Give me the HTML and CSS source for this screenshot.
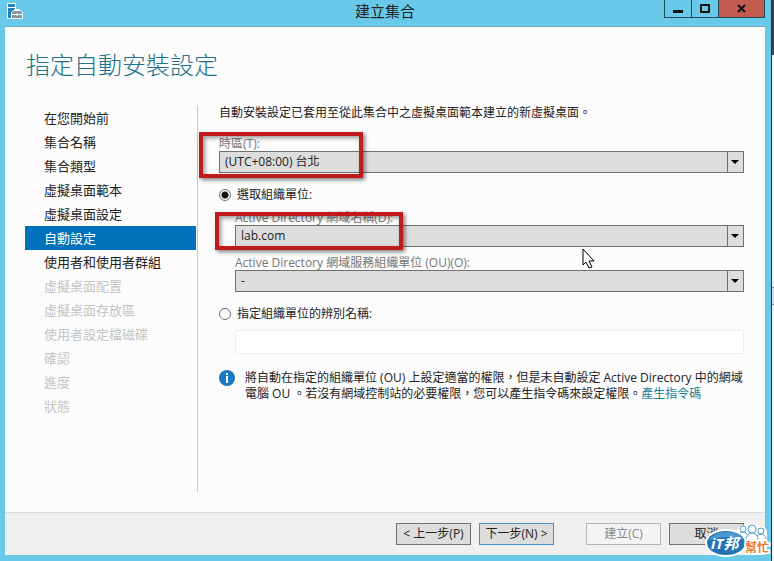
FILE: index.html
```
<!DOCTYPE html>
<html lang="zh-Hant">
<head>
  <meta charset="UTF-8">
  <meta name="viewport" content="width=device-width, initial-scale=1.0">
  <title>建立集合</title>
  <link rel="stylesheet" href="styles.css">
</head>
<body>
  <div class="window">
    <header class="titlebar">
      <svg class="app-icon" viewBox="0 0 16 16" width="16" height="16">
        <path d="M0.500 0.500h8v15h-8z" fill="#2b7fb8" stroke="#fff"/>
        <path d="M1 4.500h7" stroke="#fff"/>
        <path d="M4.500 9.500l2-2h7l2 2v6h-11z" fill="#8296a3" stroke="#fff"/>
        <path d="M7.500 7.500v-1h5v1M5 11.500h4M11 11.500h4M9.500 10.500v2M10.500 10.500v2" fill="none" stroke="#fff"/>
      </svg>
      <h1>建立集合</h1>
      <div class="window-buttons">
        <button type="button" aria-label="最小化">
          <svg viewBox="0 0 10 10" width="10" height="10"><path d="M0 6h10v3H0z" fill="#111"/></svg>
        </button>
        <button type="button" aria-label="最大化">
          <svg viewBox="0 0 10 10" width="10" height="10"><path d="M1 1h8v7H1z" fill="none" stroke="#111" stroke-width="2"/></svg>
        </button>
        <button type="button" class="close" aria-label="關閉">
          <svg viewBox="0 0 10 10" width="10" height="10"><path d="M1 1l7 7M8 1l-7 7" stroke="#111" stroke-width="2"/></svg>
        </button>
      </div>
    </header>

    <form class="wizard">
      <h2>指定自動安裝設定</h2>

      <div class="columns">
        <nav>
          <ul class="steps">
            <li><a href="#">在您開始前</a></li>
            <li><a href="#">集合名稱</a></li>
            <li><a href="#">集合類型</a></li>
            <li><a href="#">虛擬桌面範本</a></li>
            <li><a href="#">虛擬桌面設定</a></li>
            <li class="current"><a href="#">自動設定</a></li>
            <li><a href="#">使用者和使用者群組</a></li>
            <li class="disabled">虛擬桌面配置</li>
            <li class="disabled">虛擬桌面存放區</li>
            <li class="disabled">使用者設定檔磁碟</li>
            <li class="disabled">確認</li>
            <li class="disabled">進度</li>
            <li class="disabled">狀態</li>
          </ul>
        </nav>

        <div class="content">
          <p class="intro">自動安裝設定已套用至從此集合中之虛擬桌面範本建立的新虛擬桌面。</p>

          <div class="field">
            <label for="timezone">時區(T):</label>
            <div class="select">
              <select id="timezone"><option>(UTC+08:00) 台北</option></select>
            </div>
            <span class="mark mark-timezone"></span>
          </div>

          <label class="choice">
            <input type="radio" name="ou" checked>
            選取組織單位:
          </label>
          <div class="nested">
            <div class="field">
              <label for="domain">Active Directory 網域名稱(D):</label>
              <div class="select">
                <select id="domain"><option>lab.com</option></select>
              </div>
              <span class="mark mark-domain"></span>
            </div>
            <div class="field">
              <label for="unit">Active Directory 網域服務組織單位 (OU)(O):</label>
              <div class="select">
                <select id="unit"><option>-</option></select>
              </div>
            </div>
          </div>

          <label class="choice">
            <input type="radio" name="ou">
            指定組織單位的辨別名稱:
          </label>
          <div class="nested">
            <input type="text" class="dn" aria-label="指定組織單位的辨別名稱" disabled>
          </div>

          <div class="note">
            <svg viewBox="0 0 16 16" width="16" height="16">
              <circle cx="8" cy="8" r="8" fill="#1979c2"/>
              <path d="M7 3h2v2H7zM7 6h2v7H7z" fill="#fff"/>
            </svg>
            <p>將自動在指定的組織單位 (OU) 上設定適當的權限，但是未自動設定 Active Directory 中的網域電腦 OU 。若沒有網域控制站的必要權限，您可以產生指令碼來設定權限。<a href="#">產生指令碼</a></p>
          </div>
        </div>
      </div>

      <footer class="actions">
        <button type="button">&lt; 上一步(P)</button>
        <button type="button" class="default">下一步(N) &gt;</button>
        <button type="button" class="create" disabled>建立(C)</button>
        <button type="button">取消</button>
      </footer>
    </form>
  </div>

  <div class="backdrop">
    <div class="backdrop-top"></div>
    <div class="backdrop-panel"></div>
    <div class="backdrop-row"></div>
    <div class="backdrop-panel last"></div>
  </div>

  <svg class="cursor" viewBox="0 0 13 21" width="13" height="21">
    <path d="M1 1v16l3-3 3 6 3-1-3-6h5z" fill="#fff" stroke="#000"/>
  </svg>

  <div class="watermark">
    <svg viewBox="0 0 64 36" width="64" height="36">
      <path d="M32 17v-7q0-8 8-8q4-3 8-1q5-1 8 2q6 1 6 7v16h-30z" fill="#fff"/>
      <g fill="#fff" stroke="#4b9fd0" stroke-width="1">
        <path d="M33 14q1-5 5-5q4 0 5 5v3h-10zM51 16q1-5 5-5q4 0 5 5v3h-10z"/>
        <circle cx="38" cy="6" r="3"/>
        <circle cx="56" cy="8" r="3"/>
        <path d="M41 16q1-6 6-6q5 0 6 6v2h-12z"/>
        <circle cx="47" cy="6" r="4"/>
      </g>
      <ellipse cx="21" cy="20" rx="21" ry="14" fill="#fff"/>
      <ellipse cx="21" cy="20" rx="19" ry="12" fill="#2474b5"/>
      <path d="M4 17q6-8 18-8t17 8q-16-6-35 0z" fill="#4c9bd0"/>
    </svg>
    <span class="brand">iT邦</span>
    <span class="help">幫忙</span>
  </div>
</body>
</html>
```

FILE: styles.css
```
* {
  box-sizing: border-box;
}

body {
  margin: 0;
  min-height: 100vh;
  display: flex;
  background-color: #68c9e8;
  font-family: "Open Sans", "Noto Sans CJK TC", sans-serif;
  font-size: 12px;
  line-height: 16px;
  color: #222;
  position: relative;
}

h1, h2, p, ul {
  margin: 0;
  padding: 0;
  font-weight: normal;
}

button, input, select {
  font: inherit;
  color: inherit;
}

.window {
  flex: 1;
  display: flex;
  flex-direction: column;
  padding: 0 6px 6px 5px;
}

.titlebar {
  display: grid;
  grid-template-columns: 1fr auto 1fr;
  height: 26px;
}

.app-icon {
  margin: 3px 2px;
}

.titlebar h1 {
  font-size: 15px;
  line-height: 22px;
}

.window-buttons {
  display: flex;
  justify-content: flex-end;
  height: 18px;
}

.window-buttons button {
  width: 27px;
  padding: 0;
  border: 1px solid #234a58;
  border-width: 0 0 1px 1px;
  background: none;
  line-height: 0;
}

.window-buttons .close {
  width: 47px;
  border-right-width: 1px;
  background-color: #c35b50;
}

.wizard {
  flex: 1;
  display: flex;
  flex-direction: column;
  border-top: 1px solid #6fa9bd;
  background-color: #fcfcfc;
}

.wizard h2 {
  padding: 20px 21px 22px;
  font-size: 24px;
  font-weight: 300;
  line-height: 36px;
  color: #23708a;
}

.columns {
  flex: 1;
  display: flex;
  margin-bottom: 20px;
}

nav {
  width: 193px;
  padding: 1px 1px 0 20px;
  border-right: 1px solid #c8c8c8;
}

.steps {
  list-style: none;
  font-size: 13px;
  line-height: 24px;
}

.steps li {
  padding-left: 19px;
}

.steps a {
  color: inherit;
  text-decoration: none;
}

.steps .current {
  background-color: #0072bc;
  color: #fff;
}

.steps .disabled {
  color: #c4c4c4;
}

.content {
  flex: 1;
  padding: 0 21px;
}

.intro {
  margin-bottom: 16px;
}

.field {
  position: relative;
}

.field label {
  display: block;
  line-height: 14px;
  color: #777;
}

.select {
  position: relative;
}

.select::before {
  content: "";
  position: absolute;
  top: 0;
  bottom: 0;
  right: 16px;
  border-left: 1px solid #707070;
}

.select::after {
  content: "";
  position: absolute;
  top: 9px;
  right: 5px;
  border: 4px solid transparent;
  border-top-color: #000;
  border-bottom: 0;
}

select {
  display: block;
  width: 100%;
  height: 22px;
  padding: 0 20px 0 5px;
  border: 1px solid #707070;
  border-radius: 0;
  background-color: #ddd;
  appearance: none;
}

.choice {
  display: flex;
  align-items: center;
  gap: 6px;
  margin: 14px 0 8px;
}

.choice input {
  appearance: none;
  width: 12px;
  height: 12px;
  margin: 0;
  border: 1px solid #707070;
  border-radius: 50%;
  background-color: #fff;
}

.choice input:checked {
  background-image: radial-gradient(circle, #111 3px, transparent 4px);
}

.nested {
  padding-left: 16px;
}

.nested .field + .field {
  margin-top: 9px;
}

.dn {
  display: block;
  width: 100%;
  height: 24px;
  border: 1px solid #ececec;
  background-color: #fff;
}

.note {
  display: flex;
  gap: 10px;
  margin-top: 16px;
}

.note svg {
  flex: none;
}

.note a {
  color: #1f7f95;
  text-decoration: none;
}

.actions {
  display: flex;
  justify-content: flex-end;
  gap: 8px;
  padding: 10px 21px;
  border-top: 1px solid #dcdcdc;
  background-color: #f0f0f0;
}

.actions button {
  width: 75px;
  height: 22px;
  padding: 0;
  border: 1px solid #707070;
  background-color: #ddd;
}

.actions .default {
  border-color: #4a90c4;
}

.actions .create {
  margin-left: 24px;
  border-color: #b5b5b5;
  background-color: #f4f4f4;
  color: #888;
}

/* red annotation frames */
.mark {
  position: absolute;
  left: -20px;
  border: 4px solid #c01a1c;
  box-shadow: 2px 2px 4px rgba(0, 0, 0, 0.5), inset 2px 2px 4px rgba(0, 0, 0, 0.4);
}

.mark-timezone {
  top: -5px;
  width: 164px;
  height: 46px;
}

.mark-domain {
  top: 1px;
  width: 188px;
  height: 38px;
}

/* the desktop behind the window */
.backdrop {
  display: flex;
  flex-direction: column;
  width: 3px;
  border-left: 1px solid #1d3440;
  background-color: #f2f6f7;
}

.backdrop-top {
  height: 55px;
  background-color: #3a444c;
}

.backdrop-panel {
  flex: 1;
}

.backdrop-panel.last {
  flex-grow: 1.1;
}

.backdrop-row {
  height: 18px;
  border: 1px solid #87959b;
  border-width: 1px 0;
  background-color: #d5dde0;
}

.cursor {
  position: absolute;
  top: 248px;
  left: 582px;
}

.watermark {
  position: absolute;
  right: 5px;
  bottom: 2px;
  width: 64px;
  height: 36px;
}

.watermark span {
  position: absolute;
  font-weight: bold;
  white-space: nowrap;
}

.watermark .brand {
  left: 6px;
  top: 12px;
  font-size: 15px;
  font-style: italic;
  color: #fff;
}

.watermark .help {
  right: 0;
  bottom: 3px;
  color: #e8792b;
  -webkit-text-stroke: 3px #fff;
  paint-order: stroke fill;
}
```
